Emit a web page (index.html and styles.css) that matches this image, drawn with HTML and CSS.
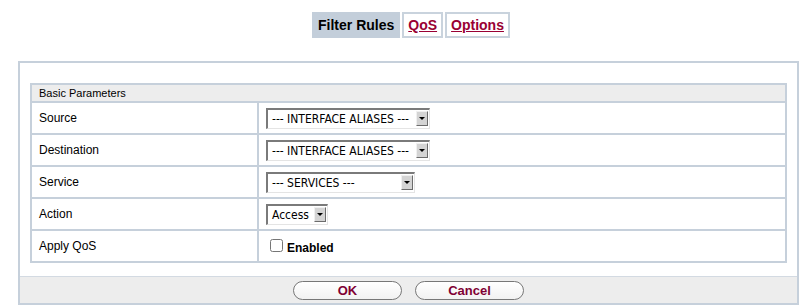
FILE: index.html
```html
<!DOCTYPE html>
<html lang="en">
<head>
    <meta charset="UTF-8">
    <title>Filter Rules</title>
    <link rel="stylesheet" href="styles.css">
</head>
<body>
    <div class="tabs">
        <span class="tab active">Filter Rules</span>
        <a class="tab" href="#">QoS</a>
        <a class="tab" href="#">Options</a>
    </div>

    <div class="panel">
        <div class="panel-body">
            <table class="params">
                <tr><th colspan="2">Basic Parameters</th></tr>
                <tr>
                    <td class="label">Source</td>
                    <td class="field">
                        <span class="select alias"><span class="value">--- INTERFACE ALIASES ---</span><span class="arrow"></span></span>
                    </td>
                </tr>
                <tr>
                    <td class="label">Destination</td>
                    <td class="field">
                        <span class="select alias"><span class="value">--- INTERFACE ALIASES ---</span><span class="arrow"></span></span>
                    </td>
                </tr>
                <tr>
                    <td class="label">Service</td>
                    <td class="field">
                        <span class="select service"><span class="value">--- SERVICES ---</span><span class="arrow"></span></span>
                    </td>
                </tr>
                <tr>
                    <td class="label">Action</td>
                    <td class="field">
                        <span class="select action"><span class="value">Access</span><span class="arrow"></span></span>
                    </td>
                </tr>
                <tr>
                    <td class="label">Apply QoS</td>
                    <td class="field">
                        <label class="check"><input type="checkbox"><span>Enabled</span></label>
                    </td>
                </tr>
            </table>
        </div>

        <!-- Buttons -->
        <div class="actions">
            <button class="btn" type="button">OK</button>
            <button class="btn" type="button">Cancel</button>
        </div>
    </div>
</body>
</html>
```

FILE: styles.css
```css
body {
    margin: 0;
    padding: 0;
    font-family: "Liberation Sans", Arial, sans-serif;
    font-size: 12px;
    color: #000;
    background: #fff;
}

/* Tabs */
.tabs {
    display: flex;
    justify-content: center;
    gap: 2px;
    padding: 12px 0 0 22px;
    margin-bottom: 23px;
}

.tab {
    box-sizing: border-box;
    height: 26px;
    line-height: 22px;
    padding: 0 4px;
    border: 2px solid #c9d3dd;
    background: #fff;
    font-weight: bold;
    font-size: 14px;
    color: #990033;
    text-decoration: underline;
}

.tab.active {
    background: #c3ceda;
    border-color: #c3ceda;
    color: #000;
    text-decoration: none;
}

/* Panel */
.panel {
    margin: 0 1px 0 18px;
    border: 2px solid #c6d0db;
}

.panel-body {
    padding: 20px 10px 13px;
}

.params {
    width: 100%;
    border-collapse: collapse;
    border: 2px solid #c6d0db;
}

.params th {
    height: 16px;
    padding: 0 7px;
    background: #ededed;
    border: 2px solid #c6d0db;
    text-align: left;
    font-weight: normal;
    font-size: 11px;
}

.params td {
    height: 30px;
    padding: 0 7px;
    border: 2px solid #c6d0db;
}

.params td.label {
    width: 211px;
}

/* Select boxes */
.select {
    box-sizing: border-box;
    display: inline-flex;
    align-items: center;
    height: 21px;
    border-top: 2px solid #7a7a7a;
    border-left: 2px solid #7a7a7a;
    border-right: 1px solid #e4e4e4;
    border-bottom: 1px solid #e4e4e4;
    background: #fff;
    vertical-align: middle;
    font-family: "DejaVu Sans Condensed", "DejaVu Sans", sans-serif;
    font-size: 12px;
}

.select .value {
    flex: 1;
    padding-left: 4px;
    white-space: nowrap;
    overflow: hidden;
}

.select .arrow {
    position: relative;
    flex: none;
    box-sizing: border-box;
    width: 12px;
    height: 15px;
    margin-right: 1px;
    background: #d4d4d4;
    border-top: 1px solid #f0f0f0;
    border-left: 1px solid #f0f0f0;
    border-right: 1px solid #6c6c6c;
    border-bottom: 1px solid #6c6c6c;
}

.select .arrow:after {
    content: '';
    position: absolute;
    top: 5px;
    left: 2px;
    border-left: 3px solid transparent;
    border-right: 3px solid transparent;
    border-top: 3px solid #000;
}

.select.alias {
    width: 164px;
}

.select.service {
    width: 149px;
}

.select.action {
    width: 62px;
}

/* Checkbox */
.check {
    display: inline-flex;
    align-items: flex-end;
    gap: 4px;
    font-weight: bold;
}

.check input {
    margin: 0 0 0 4px;
    width: 13px;
    height: 13px;
}

.check span {
    position: relative;
    top: 3px;
}

/* Buttons */
.actions {
    display: flex;
    justify-content: center;
    align-items: center;
    gap: 13px;
    height: 26px;
    border-top: 1px solid #d3dae2;
    background: #ededed;
}

.btn {
    width: 109px;
    height: 19px;
    padding: 0;
    border: 1px solid #777;
    border-radius: 10px;
    background: linear-gradient(#ffffff, #f2f2f2);
    font-family: "Liberation Sans", Arial, sans-serif;
    font-weight: bold;
    font-size: 13px;
    color: #800033;
}
```
